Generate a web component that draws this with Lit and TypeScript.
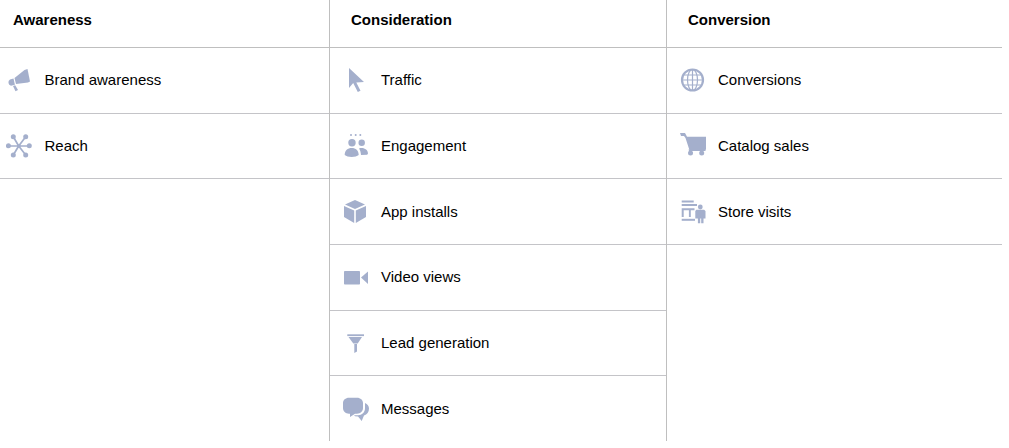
import { LitElement, html, css, svg } from "lit";
import { customElement } from "lit/decorators.js";

const icons: Record<string, unknown> = {
  brand: svg`<path d="M8.500 11 18.500 3 21.500 2 24 14.500 22 15.500 10 17z"/><path d="M7.500 11.500l1.400 6.300-3.900 1A3.500 3.500 0 0 1 4 12.500z"/><path d="M7 19l2.200-.7 2.800 4.700-2.500 1.200z"/>`,
  reach: svg`<g stroke="#a4afcc" stroke-width="1.700"><path d="M12.700 13 7.300 3.700M12.700 13l7-9.300M12.700 13H2M12.700 13h10.600M12.700 13l-5.400 9M12.700 13l7 9"/></g><circle cx="12.700" cy="13" r="1.800"/><circle cx="7.300" cy="3.700" r="2.500"/><circle cx="19.700" cy="3.700" r="2.500"/><circle cx="2.400" cy="12.800" r="2.500"/><circle cx="23.300" cy="12.800" r="2.500"/><circle cx="7.300" cy="22" r="2.500"/><circle cx="19.700" cy="22" r="2.500"/>`,
  traffic: svg`<path d="M6 1v20l4.200-5 4.600 9 2.700-1.300-4.200-8.200 7.700-.5z"/>`,
  engagement: svg`<circle cx="8" cy="2" r="1"/><circle cx="12.700" cy="2" r="1"/><circle cx="17.300" cy="2" r="1"/><circle cx="9" cy="9.700" r="3.700"/><circle cx="18.700" cy="9.700" r="3.200"/><path d="M1.700 22c0-4.500 3-7 7-7s7 2.500 7 7c-1.500 1.300-4 2-7 2s-5.500-.7-7-2z"/><path d="M16 15.500c.8-.5 1.800-.6 2.700-.6 3.300 0 6.300 2.200 6.300 5.600l-.8 1.200-6.200.3c-.2-2.500-.6-4.600-2-6.500z"/>`,
  app: svg`<path d="M12 1 22 5.500 12 10 2 5.500z"/><path d="M1 7l10.200 4.500V24L1 18z"/><path d="M23 7l-10.200 4.500V24L23 18z"/>`,
  video: svg`<rect x="1" y="7" width="16" height="13.500" rx=".8"/><path d="M18 13.500l7-6v12.500z"/>`,
  lead: svg`<rect x="4.300" y="4.300" width="16.700" height="1.800"/><path d="M5.500 7H19l-4.300 6.500H10.300z"/><path d="M11.300 14H14v7.500L11.300 23z"/>`,
  messages: svg`<path d="M6 1.700h8c3.500 0 6 2.300 6 5.300v5c0 3.200-2.500 5.700-6 5.700H12L7 21v-3.300H6c-3.500 0-6-2.500-6-5.700V7C0 4 2.500 1.700 6 1.700z"/><path d="M22 7c2.500 1 4 3 4 5.500 0 3.500-2 6-5 7L18.700 25 15 20.500l-3-.2-1-1 4-.1c4 0 7-3 7-7z"/>`,
  conversions: svg`<circle cx="12.500" cy="13" r="10.500" fill="none" stroke="#a4afcc" stroke-width="2.200"/><g fill="none" stroke="#a4afcc" stroke-width="1.200"><ellipse cx="12.500" cy="13" rx="5" ry="10.500"/><path d="M12.500 2.500v21M2 13h21M3.500 8h18M3.500 18h18"/></g>`,
  catalog: svg`<path d="M0 0h5l2 3.700h19v12.500l-1 1H9.500L5.500 5 4 3H1z"/><path d="M8.500 16.500h17v1.500H9z"/><circle cx="10.500" cy="20" r="2.500"/><circle cx="21.700" cy="20" r="2.500"/>`,
  store: svg`<rect x="1.700" y="1.500" width="12" height="2"/><rect x="1.700" y="5" width="15.300" height="2"/><path d="M1.700 9.300H14.500v1.900h-3.700v6.800H8.900v-6.800H3.700V18H1.700z"/><rect x="1.700" y="19.800" width="13.300" height="2"/><circle cx="20.300" cy="8" r="2.400"/><path d="M16.300 10.800h7.800l1.400 1.200v7.500h-2v4.700h-2.300v-4.700h-1v4.700h-2.300v-4.700h-2.600V12z"/>`,
};

const columns = [
  { title: "Awareness", items: [["brand", "Brand awareness"], ["reach", "Reach"]] },
  { title: "Consideration", items: [["traffic", "Traffic"], ["engagement", "Engagement"], ["app", "App installs"], ["video", "Video views"], ["lead", "Lead generation"], ["messages", "Messages"]] },
  { title: "Conversion", items: [["conversions", "Conversions"], ["catalog", "Catalog sales"], ["store", "Store visits"]] },
];

@customElement("app-root")
export class AppRoot extends LitElement {
  static styles = css`
    :host {
      display: block;
      font-family: "Liberation Sans", Arial, sans-serif;
      font-size: 15px;
      color: #000;
      background: #fff;
    }
    .table {
      display: grid;
      grid-template-columns: 329px 337px 336px;
      height: 441px;
    }
    .col + .col {
      border-left: 1px solid #bfbfbf;
    }
    .head {
      box-sizing: border-box;
      height: 48px;
      padding: 12px 0 0 13px;
      line-height: 16px;
      font-weight: 700;
      border-bottom: 1px solid #bfbfbf;
    }
    .col + .col .head {
      padding-left: 21px;
    }
    .row {
      box-sizing: border-box;
      height: 65.7px;
      display: flex;
      align-items: center;
      gap: 11.5px;
      padding: 0 0 0 6px;
      border-bottom: 1px solid #c4c4c8;
    }
    .col + .col .row {
      padding-left: 13px;
      gap: 11px;
    }
    .col:nth-child(2) .row:last-child {
      border-bottom: 0;
    }
    .label {
      padding-bottom: 1.4px;
    }
    svg {
      width: 27px;
      height: 26px;
      flex: none;
      fill: #a4afcc;
    }
  `;

  render() {
    return html`<div class="table">
      ${columns.map(
        (c) => html`<div class="col">
          <div class="head">${c.title}</div>
          ${c.items.map(
            ([icon, label]) => html`<div class="row">
              <svg viewBox="0 0 27 26">${icons[icon]}</svg>
              <span class="label">${label}</span>
            </div>`
          )}
        </div>`
      )}
    </div>`;
  }
}
